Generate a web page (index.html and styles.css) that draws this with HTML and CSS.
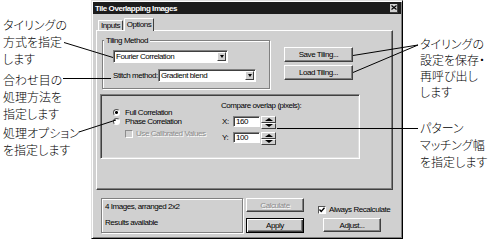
FILE: index.html
```html
<!DOCTYPE html>
<html lang="ja">
<head>
  <meta charset="UTF-8" />
  <title>Tile Overlapping Images</title>
  <link rel="stylesheet" href="styles.css">
</head>
<body>
  <div class="page">
    <div class="notes notes-left">
      <p class="note note-method">タイリングの<br>方式を指定<br>します</p>
      <p class="note note-stitch">合わせ目の<br>処理方法を<br>指定します</p>
      <p class="note note-option">処理オプション<br>を指定します</p>
    </div>

    <div class="dialog">
      <div class="titlebar">
        <span class="title">Tile Overlapping Images</span>
        <span class="close-btn">
          <svg width="6" height="5" viewBox="0 0 6 5"><path d="M0.5 0.5 L5.5 4.5 M5.5 0.5 L0.5 4.5" stroke="#000" stroke-width="1.2" fill="none"/></svg>
        </span>
      </div>

      <div class="tabs">
        <span class="tab tab-inputs">Inputs</span>
        <span class="tab tab-active">Options</span>
      </div>

      <div class="panel">
        <div class="panel-top">
          <div class="group tiling-group">
            <span class="legend">Tiling Method</span>
            <div class="combo combo-method">
              <span class="combo-value">Fourier Correlation</span>
              <span class="combo-arrow"></span>
            </div>
            <div class="stitch-row">
              <span class="stitch-label">Stitch method:</span>
              <div class="combo combo-stitch">
                <span class="combo-value">Gradient blend</span>
                <span class="combo-arrow"></span>
              </div>
            </div>
          </div>
          <div class="tiling-buttons">
            <button class="btn btn-tiling">Save Tiling...</button>
            <button class="btn btn-tiling">Load Tiling...</button>
          </div>
        </div>

        <div class="options-box">
          <div class="corr-col">
            <div class="radio-row"><span class="radio checked"></span>Full Correlation</div>
            <div class="radio-row"><span class="radio"></span>Phase Correlation</div>
            <div class="check-row calibrated disabled"><span class="checkbox"></span>Use Calibrated Values</div>
          </div>
          <div class="overlap-col">
            <div class="overlap-label">Compare overlap (pixels):</div>
            <div class="spin-row">
              <span class="axis">X:</span>
              <span class="field">160</span>
              <span class="spinner"><span class="spin-up"></span><span class="spin-down"></span></span>
            </div>
            <div class="spin-row spin-row-y">
              <span class="axis">Y:</span>
              <span class="field">100</span>
              <span class="spinner"><span class="spin-up"></span><span class="spin-down"></span></span>
            </div>
          </div>
        </div>
      </div>

      <div class="footer">
        <div class="group status-box">
          <div>4 Images, arranged 2x2</div>
          <div class="status-second">Results available</div>
        </div>
        <div class="action-col">
          <button class="btn btn-calc" disabled>Calculate</button>
          <button class="btn btn-apply">Apply</button>
        </div>
        <div class="recalc-col">
          <div class="check-row">
            <span class="checkbox checked">
              <svg width="6" height="6" viewBox="0 0 6 6"><path d="M0.5 2.5 L2.2 4.5 L5.5 0.8" stroke="#000" stroke-width="1.3" fill="none"/></svg>
            </span>Always Recalculate
          </div>
          <button class="btn btn-adjust">Adjust...</button>
        </div>
      </div>
    </div>

    <div class="notes notes-right">
      <p class="note note-save">タイリングの<br>設定を保存・<br>再呼び出し<br>します</p>
      <p class="note note-width">パターン<br>マッチング幅<br>を指定します</p>
    </div>

    <svg class="leaders" width="494" height="241" viewBox="0 0 494 241">
      <g stroke="#000" stroke-width="1" fill="none">
        <line x1="64" y1="42.5" x2="113" y2="57.5" />
        <line x1="63" y1="78.5" x2="111" y2="78.5" />
        <line x1="79" y1="132" x2="116" y2="120" />
        <line x1="353" y1="55.5" x2="418" y2="45" />
        <line x1="353" y1="72.5" x2="418" y2="45" />
        <line x1="277" y1="128.5" x2="418" y2="128.5" />
      </g>
    </svg>
  </div>
</body>
</html>
```

FILE: styles.css
```css
* {
  box-sizing: border-box;
}

body {
  margin: 0;
  background-color: #fff;
  font-family: "Noto Sans CJK JP", sans-serif;
}

.page {
  position: relative;
  display: flex;
  width: 494px;
  height: 241px;
}

/* annotations */

.notes {
  font-size: 12px;
  font-weight: 300;
  line-height: 17px;
  font-feature-settings: "palt";
  color: #000;
}

.note {
  margin: 0;
}

.notes-left {
  width: 91px;
  padding-left: 3px;
}

.note-method { margin-top: 16px; }
.note-stitch { margin-top: 4px; }
.note-option { margin-top: 2px; }

.notes-right {
  padding-left: 17px;
}

.note-save {
  margin-top: 36px;
  line-height: 16px;
}

.note-width { margin-top: 19px; }

.leaders {
  position: absolute;
  top: 0;
  left: 0;
  pointer-events: none;
}

/* dialog */

.dialog {
  width: 312px;
  height: 239px;
  padding: 1px;
  display: flex;
  flex-direction: column;
  background-color: #d0d0d0;
  border: 1px solid;
  border-color: #dfdfdf #000 #000 #dfdfdf;
  box-shadow: inset 1px 1px #fff, inset -1px -1px #808080;
  font-family: "Liberation Sans", Arial, sans-serif;
  font-size: 8px;
  letter-spacing: -0.45px;
  line-height: 9px;
  color: #000;
}

.titlebar {
  height: 12px;
  padding: 0 3px 0 2px;
  display: flex;
  align-items: center;
  justify-content: space-between;
  background-color: #1c1c1c;
}

.title {
  color: #fff;
  font-weight: bold;
}

.close-btn {
  width: 8px;
  height: 9px;
  display: flex;
  align-items: center;
  justify-content: center;
  background-color: #d0d0d0;
  border-right: 1px solid #404040;
  border-bottom: 1px solid #404040;
}

.tabs {
  position: relative;
  z-index: 1;
  height: 12px;
  margin-top: 4px;
  padding-left: 5px;
  display: flex;
  align-items: flex-end;
}

.tab {
  height: 10px;
  text-align: center;
  border: 1px solid;
  border-bottom: none;
  border-color: #fff #404040 transparent #fff;
  border-radius: 1px 1px 0 0;
}

.tab-inputs { width: 25px; }

.tab-active {
  width: 30px;
  height: 13px;
  margin-left: 1px;
  margin-bottom: -1px;
  padding-top: 1px;
  background-color: #d0d0d0;
}

.panel {
  width: 297px;
  height: 160px;
  margin-left: 3px;
  padding: 9px 0 0 3px;
  border: 1px solid;
  border-color: #fff #404040 #404040 #fff;
  box-shadow: inset -1px -1px #808080;
}

.panel-top {
  display: flex;
  align-items: flex-start;
}

.group {
  border: 1px solid #808080;
  box-shadow: inset 1px 1px #fff, 1px 1px #fff;
}

.tiling-group {
  width: 168px;
  height: 49px;
  margin-left: 2px;
}

.legend {
  display: block;
  width: fit-content;
  margin: -5px 0 0 1px;
  padding: 0 2px;
  background-color: #d0d0d0;
}

.combo {
  height: 13px;
  display: flex;
  align-items: center;
  padding: 0 1px 0 2px;
  background-color: #fff;
  border: 1px solid;
  border-color: #808080 #fff #fff #808080;
  box-shadow: inset 1px 1px #404040;
}

.combo-method {
  width: 115px;
  margin: 5px 0 0 10px;
}

.combo-stitch { width: 98px; }

.combo-arrow {
  width: 9px;
  height: 9px;
  margin-left: auto;
  display: flex;
  align-items: center;
  justify-content: center;
  background-color: #d0d0d0;
  border: 1px solid;
  border-color: #fff #404040 #404040 #fff;
}

.combo-arrow::after {
  content: "";
  border-left: 2px solid transparent;
  border-right: 2px solid transparent;
  border-top: 3px solid #000;
}

.stitch-row {
  margin: 6px 0 0 10px;
  display: flex;
  align-items: center;
}

.stitch-label { width: 45px; }

.tiling-buttons {
  margin: 7px 0 0 14px;
  display: flex;
  flex-direction: column;
  gap: 3px;
}

.btn {
  display: block;
  padding: 0;
  font: inherit;
  letter-spacing: inherit;
  color: #000;
  text-align: center;
  background-color: #d0d0d0;
  border: 1px solid;
  border-color: #fff #404040 #404040 #fff;
  box-shadow: inset -1px -1px #808080;
}

.btn-tiling {
  width: 69px;
  height: 15px;
}

.options-box {
  width: 260px;
  height: 65px;
  margin-top: 5px;
  display: flex;
  border: 1px solid;
  border-color: #808080 #fff #fff #808080;
  box-shadow: inset 1px 1px #404040, inset -1px -1px #dfdfdf;
}

.corr-col {
  width: 120px;
  padding: 13px 0 0 12px;
}

.radio-row,
.check-row {
  height: 9px;
  display: flex;
  align-items: center;
}

.radio {
  width: 7px;
  height: 7px;
  margin-right: 5px;
  border-radius: 50%;
  background-color: #fff;
  border: 1px solid;
  border-color: #555 #fff #fff #555;
}

.radio.checked {
  background: radial-gradient(circle, #000 1.2px, #fff 1.7px);
}

.checkbox {
  width: 8px;
  height: 8px;
  margin-right: 3px;
  display: flex;
  align-items: center;
  justify-content: center;
  background-color: #fff;
  border: 1px solid;
  border-color: #555 #fff #fff #555;
}

.calibrated {
  margin: 3px 0 0 12px;
}

.disabled {
  color: #8c8c8c;
  text-shadow: 1px 1px #fff;
}

.disabled .checkbox {
  background-color: #d0d0d0;
  border-color: #8c8c8c #fff #fff #8c8c8c;
}

.overlap-col {
  padding-top: 6px;
}

.spin-row {
  margin-top: 6px;
  display: flex;
  align-items: flex-start;
}

.spin-row-y { margin-top: 3px; }

.axis {
  width: 12px;
  padding: 1px 0 0 1px;
}

.field {
  width: 27px;
  height: 11px;
  padding-left: 2px;
  background-color: #fff;
  border: 1px solid;
  border-color: #808080 #fff #fff #808080;
  box-shadow: inset 1px 1px #404040;
}

.spinner {
  width: 15px;
  height: 13px;
  margin-left: 1px;
  display: flex;
  flex-direction: column;
}

.spin-up,
.spin-down {
  flex: 1;
  display: flex;
  align-items: center;
  justify-content: center;
  background-color: #d0d0d0;
  border: 1px solid;
  border-color: #fff #404040 #404040 #fff;
}

.spin-up::after {
  content: "";
  border-left: 4px solid transparent;
  border-right: 4px solid transparent;
  border-bottom: 3px solid #000;
}

.spin-down::after {
  content: "";
  border-left: 4px solid transparent;
  border-right: 4px solid transparent;
  border-top: 3px solid #000;
}

/* bottom row */

.footer {
  margin-top: 8px;
  padding-left: 8px;
  display: flex;
  align-items: flex-start;
}

.status-box {
  width: 142px;
  height: 35px;
  padding: 3px 0 0 3px;
}

.status-second { margin-top: 7px; }

.action-col {
  margin-left: 3px;
  display: flex;
  flex-direction: column;
}

.btn-calc {
  width: 58px;
  height: 14px;
  color: #8c8c8c;
  text-shadow: 1px 1px #fff;
}

.btn-apply {
  width: 58px;
  height: 15px;
  margin-top: 6px;
  border-color: #000;
  box-shadow: inset 1px 1px #fff, inset -1px -1px #404040, inset -2px -2px #808080;
}

.recalc-col {
  margin-left: 14px;
}

.recalc-col .check-row {
  margin-top: 7px;
}

.btn-adjust {
  width: 58px;
  height: 14px;
  margin: 4px 0 0 5px;
}
```
